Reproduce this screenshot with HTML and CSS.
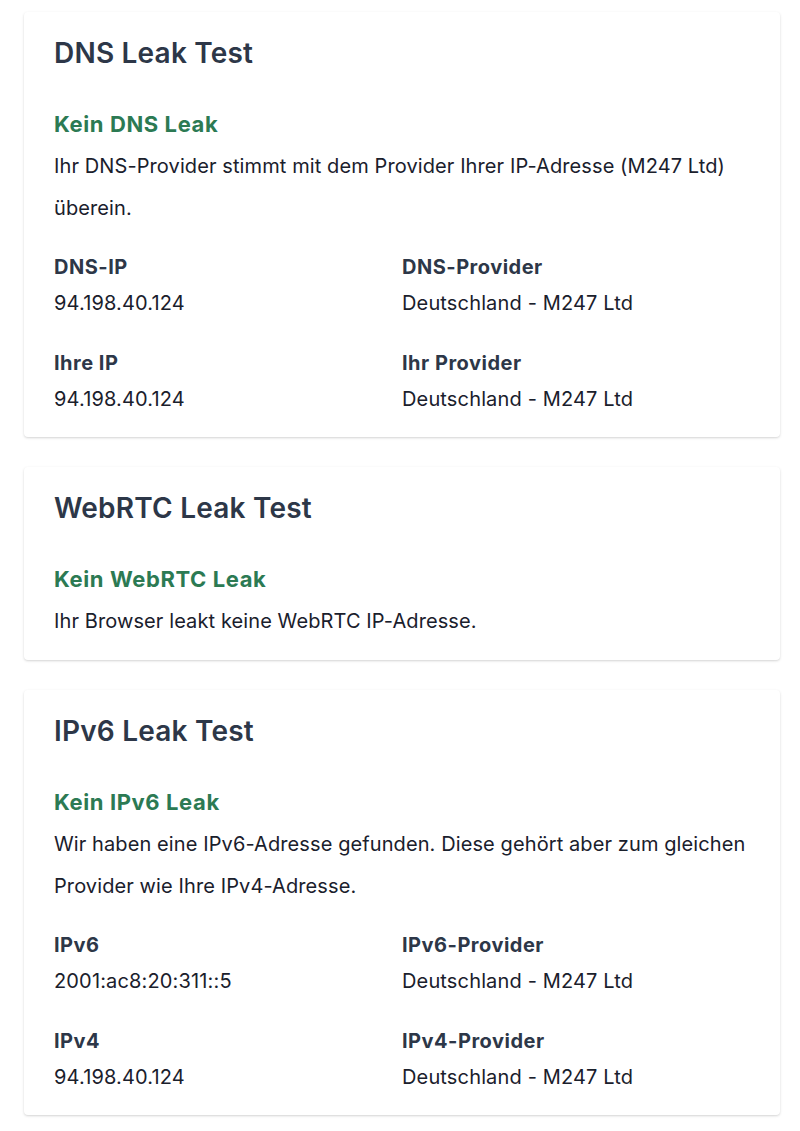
FILE: index.html
```html
<!DOCTYPE html>
<html lang="de">
<head>
    <meta charset="UTF-8">
    <meta name="viewport" content="width=device-width, initial-scale=1.0">
    <title>Leak Test</title>
    <link rel="stylesheet" href="styles.css">
</head>
<body>

<div class="page">

    <div class="card">
        <h2 class="card-title">DNS Leak Test</h2>
        <h3 class="result">Kein DNS Leak</h3>
        <p class="text">Ihr DNS-Provider stimmt mit dem Provider Ihrer IP-Adresse (M247 Ltd) überein.</p>
        <div class="info-grid">
            <div class="info">
                <div class="label">DNS-IP</div>
                <div class="value">94.198.40.124</div>
            </div>
            <div class="info">
                <div class="label">DNS-Provider</div>
                <div class="value">Deutschland - M247 Ltd</div>
            </div>
            <div class="info">
                <div class="label">Ihre IP</div>
                <div class="value">94.198.40.124</div>
            </div>
            <div class="info">
                <div class="label">Ihr Provider</div>
                <div class="value">Deutschland - M247 Ltd</div>
            </div>
        </div>
    </div>

    <div class="card">
        <h2 class="card-title">WebRTC Leak Test</h2>
        <h3 class="result">Kein WebRTC Leak</h3>
        <p class="text">Ihr Browser leakt keine WebRTC IP-Adresse.</p>
    </div>

    <div class="card">
        <h2 class="card-title">IPv6 Leak Test</h2>
        <h3 class="result">Kein IPv6 Leak</h3>
        <p class="text">Wir haben eine IPv6-Adresse gefunden. Diese gehört aber zum gleichen Provider wie Ihre IPv4-Adresse.</p>
        <div class="info-grid">
            <div class="info">
                <div class="label">IPv6</div>
                <div class="value">2001:ac8:20:311::5</div>
            </div>
            <div class="info">
                <div class="label">IPv6-Provider</div>
                <div class="value">Deutschland - M247 Ltd</div>
            </div>
            <div class="info">
                <div class="label">IPv4</div>
                <div class="value">94.198.40.124</div>
            </div>
            <div class="info">
                <div class="label">IPv4-Provider</div>
                <div class="value">Deutschland - M247 Ltd</div>
            </div>
        </div>
    </div>

</div>

</body>
</html>
```

FILE: styles.css
```css
body {
    margin: 0;
    background-color: white;
    color: #1a202c;
    font-family: Inter, "Open Sans", sans-serif;
}
.page {
    display: flex;
    flex-direction: column;
    gap: 30px;
    padding: 12px 20px 12px 24px;
}
.card {
    background-color: white;
    border-radius: 4px;
    padding: 24px 30px 18px;
    box-shadow: 0 1px 3px rgba(0, 0, 0, 0.12), 0 1px 2px rgba(0, 0, 0, 0.06);
}
.card-title {
    margin: 0 0 41px;
    font-size: 28px;
    line-height: 34px;
    font-weight: 600;
    letter-spacing: 0.2px;
    color: #2d3748;
}
.result {
    margin: 0 0 7px;
    font-size: 22px;
    line-height: 27px;
    font-weight: 700;
    letter-spacing: 0.6px;
    color: #2c7a53;
}
.text {
    margin: 0;
    font-size: 20px;
    line-height: 42px;
    letter-spacing: 0.1px;
}
.info-grid {
    display: grid;
    grid-template-columns: 1fr 1fr;
    row-gap: 32px;
    margin: 24px 0 6px;
}
.label {
    font-size: 20px;
    line-height: 28px;
    font-weight: 700;
    letter-spacing: 0.5px;
    color: #2d3748;
}
.value {
    margin-top: 8px;
    font-size: 20px;
    line-height: 28px;
    letter-spacing: 0.15px;
}
```
